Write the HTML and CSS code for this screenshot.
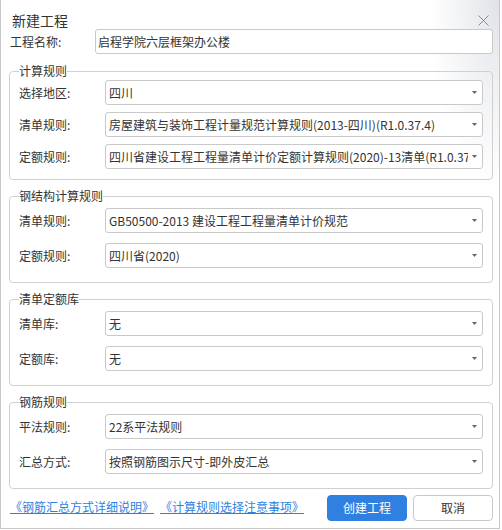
FILE: index.html
```html
<!DOCTYPE html>
<html lang="zh-CN">
<head>
<meta charset="utf-8">
<title>新建工程</title>
<link rel="stylesheet" href="styles.css">
</head>
<body>
<div class="window">
  <div class="header">
    <span class="title">新建工程</span>
    <svg class="close" viewBox="0 0 11 11" aria-label="关闭"><path d="M0.5 0.5 L10.5 10.5 M10.5 0.5 L0.5 10.5" /></svg>
  </div>
  <div class="main">
    <div class="name-row">
      <span class="name-label">工程名称:</span>
      <div class="input">启程学院六层框架办公楼</div>
    </div>

    <fieldset class="group group-first">
      <legend>计算规则</legend>
      <div class="row"><span class="label">选择地区:</span><div class="select"><span class="value">四川</span><svg class="arrow" viewBox="0 0 5 3"><polygon points="0,0 5,0 2.5,3"/></svg></div></div>
      <div class="row"><span class="label">清单规则:</span><div class="select"><span class="value">房屋建筑与装饰工程计量规范计算规则(2013-四川)(R1.0.37.4)</span><svg class="arrow" viewBox="0 0 5 3"><polygon points="0,0 5,0 2.5,3"/></svg></div></div>
      <div class="row"><span class="label">定额规则:</span><div class="select"><span class="value">四川省建设工程工程量清单计价定额计算规则(2020)-13清单(R1.0.37.4)</span><svg class="arrow" viewBox="0 0 5 3"><polygon points="0,0 5,0 2.5,3"/></svg></div></div>
    </fieldset>

    <fieldset class="group">
      <legend>钢结构计算规则</legend>
      <div class="row"><span class="label">清单规则:</span><div class="select"><span class="value">GB50500-2013 建设工程工程量清单计价规范</span><svg class="arrow" viewBox="0 0 5 3"><polygon points="0,0 5,0 2.5,3"/></svg></div></div>
      <div class="row"><span class="label">定额规则:</span><div class="select"><span class="value">四川省(2020)</span><svg class="arrow" viewBox="0 0 5 3"><polygon points="0,0 5,0 2.5,3"/></svg></div></div>
    </fieldset>

    <fieldset class="group">
      <legend>清单定额库</legend>
      <div class="row"><span class="label">清单库:</span><div class="select"><span class="value">无</span><svg class="arrow" viewBox="0 0 5 3"><polygon points="0,0 5,0 2.5,3"/></svg></div></div>
      <div class="row"><span class="label">定额库:</span><div class="select"><span class="value">无</span><svg class="arrow" viewBox="0 0 5 3"><polygon points="0,0 5,0 2.5,3"/></svg></div></div>
    </fieldset>

    <fieldset class="group">
      <legend>钢筋规则</legend>
      <div class="row"><span class="label">平法规则:</span><div class="select"><span class="value">22系平法规则</span><svg class="arrow" viewBox="0 0 5 3"><polygon points="0,0 5,0 2.5,3"/></svg></div></div>
      <div class="row"><span class="label">汇总方式:</span><div class="select"><span class="value">按照钢筋图示尺寸-即外皮汇总</span><svg class="arrow" viewBox="0 0 5 3"><polygon points="0,0 5,0 2.5,3"/></svg></div></div>
    </fieldset>

    <div class="footer">
      <a class="link" href="#">《钢筋汇总方式详细说明》</a>
      <a class="link" href="#">《计算规则选择注意事项》</a>
      <span class="spacer"></span>
      <button class="btn btn-primary">创建工程</button>
      <button class="btn">取消</button>
    </div>
  </div>
</div>
</body>
</html>
```
FILE: styles.css
```css
* { box-sizing: border-box; }

body {
  margin: 0;
  background: #fff;
  font-family: "Microsoft YaHei", "Noto Sans CJK SC", "Noto Sans", sans-serif;
  font-size: 12px;
  color: #333;
}

.window {
  width: 500px;
  height: 529px;
  border: 1px solid #c8c8c8;
  border-top: 0;
  background:
    radial-gradient(ellipse 70px 190px at 100% 0%, #dfe2e8 0%, rgba(223, 226, 232, 0.5) 45%, rgba(255, 255, 255, 0) 100%),
    #fff;
}

.header {
  display: flex;
  align-items: center;
  height: 28px;
  padding: 12px 10px 0 11px;
}

.title {
  font-size: 14px;
  line-height: 16px;
  color: #333;
}

.close {
  margin-left: auto;
  width: 11px;
  height: 11px;
  flex: none;
}

.close path {
  stroke: #8a8a8a;
  stroke-width: 1;
  fill: none;
}

.main {
  padding: 1px 6px 0 8px;
}

.name-row {
  display: flex;
  align-items: center;
  height: 25px;
}

.name-label {
  width: 86px;
  padding-left: 1px;
  line-height: 14px;
}

.input {
  flex: 1;
  height: 25px;
  border: 1px solid #c9c9c9;
  border-radius: 3px;
  background: #fff;
  padding-left: 2px;
  line-height: 23px;
  white-space: nowrap;
}

.group {
  margin: 9px 0 0;
  min-width: 0;
  padding: 5px 9px 14px;
  border: 1px solid #d0d0d0;
  border-radius: 4px;
  display: flex;
  flex-direction: column;
  gap: 10px;
}

.group-first {
  margin-top: 10px;
  padding-top: 2px;
  padding-bottom: 10px;
  gap: 7px;
}

.group legend {
  padding: 0;
  font-size: 12px;
  line-height: 14px;
  color: #333;
}

.row {
  display: flex;
  align-items: center;
  height: 25px;
}

.label {
  width: 86px;
  flex: none;
  line-height: 14px;
}

.select {
  flex: 1;
  min-width: 0;
  display: flex;
  align-items: center;
  height: 25px;
  border: 1px solid #c9c9c9;
  border-radius: 3px;
  background: #fff;
  padding-left: 3px;
}

.value {
  flex: 1;
  min-width: 0;
  overflow: hidden;
  white-space: nowrap;
  line-height: 23px;
}

.arrow {
  width: 5px;
  height: 3px;
  margin: 0 5px 0 4px;
  flex: none;
}

.arrow polygon { fill: #666; }

.footer {
  display: flex;
  align-items: center;
  height: 26px;
  margin-top: 6px;
  gap: 6px;
}

.link {
  color: #2e7fe0;
  text-decoration: underline;
  line-height: 14px;
  margin-bottom: 2px;
}

.link:first-child { margin-left: 1px; }

.spacer { flex: 1; }

.btn {
  width: 80px;
  height: 26px;
  border: 1px solid #c8c8c8;
  border-radius: 4px;
  background: #fff;
  color: #333;
  font-family: inherit;
  font-size: 12px;
  line-height: 14px;
  padding: 0;
}

.btn-primary {
  background: #2f80e1;
  border-color: #2f80e1;
  color: #fff;
}
```
